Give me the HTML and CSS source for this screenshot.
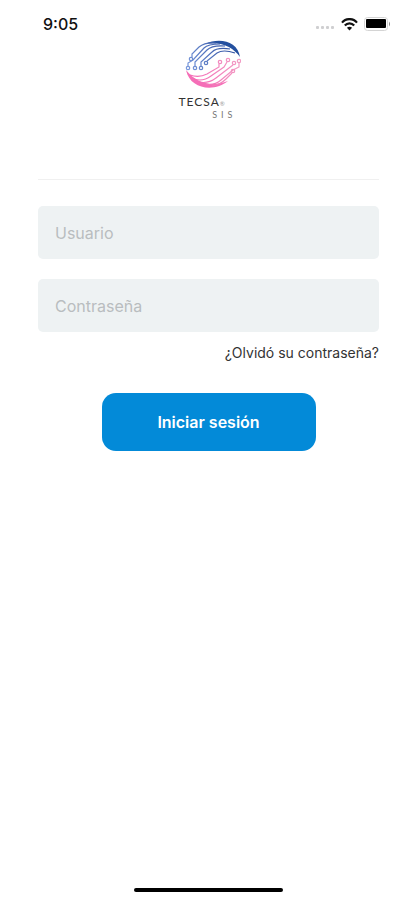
FILE: index.html
```html
<!DOCTYPE html>
<html lang="es">
<head>
<meta charset="utf-8">
<meta name="viewport" content="width=device-width, initial-scale=1">
<title>TECSA SIS</title>
<link rel="stylesheet" href="styles.css">
</head>
<body>
<header class="status">
  <span class="time">9:05</span>
  <div class="indicators">
    <svg class="signal" width="20" height="6" viewBox="0 0 20 6" fill="#cfcfd1" aria-hidden="true"><rect x="1" y="1" width="3" height="3" rx="1"/><rect x="6" y="1" width="3" height="3" rx="1"/><rect x="11" y="1" width="3" height="3" rx="1"/><rect x="16" y="1" width="3" height="3" rx="1"/></svg>
    <svg width="17" height="13" viewBox="0 0 17 13" fill="none" stroke="#111" stroke-width="2.2" aria-hidden="true"><path d="M1 4.6C5-.1 12-.1 16 4.6M3.8 7.6c2.6-2.9 6.8-2.9 9.4 0"/><path d="M8.5 12.5 5.9 9.8q2.6-2.2 5.2 0z" fill="#111" stroke="none"/></svg>
    <svg width="27" height="14" viewBox="0 0 27 14" aria-hidden="true"><rect x=".5" y=".5" width="23" height="13" rx="3" fill="#fff" stroke="#d4d4d4"/><rect x="2" y="2" width="20" height="9" rx="1" fill="#000"/><path d="M25 4.500q2 2.500 0 5z" fill="#888"/></svg>
  </div>
</header>
<main class="login">
  <div class="brand">
    <svg class="mark" width="56" height="50" viewBox="0 0 56 50" fill="none" aria-hidden="true">
      <defs>
        <linearGradient id="blue" gradientUnits="userSpaceOnUse" x1="2" y1="28" x2="50" y2="6"><stop stop-color="#7898dc"/><stop offset="1" stop-color="#294b9c"/></linearGradient>
        <linearGradient id="pink" gradientUnits="userSpaceOnUse" x1="4" y1="40" x2="54" y2="20"><stop stop-color="#f465b4"/><stop offset="1" stop-color="#f29cc4"/></linearGradient>
      </defs>
      <path d="M20 4C34-3 53 1 55 17 48 7 36 1 20 4z" fill="#24509f"/>
      <g stroke="url(#blue)" stroke-width="1.2">
        <path d="M7 17V14L14 7Q20 2 31 3"/><path d="M3 26V23L8 20 19 8Q23 4 35 4"/><path d="M10 26V22L22 10Q27 5 40 6"/><path d="M16 26V22L27 12Q32 7 45 9"/><path d="M22 21 32 13Q38 9 50 13"/>
        <circle cx="6" cy="19" r="1.700"/><circle cx="3" cy="28" r="1.700"/><circle cx="10" cy="28" r="1.700"/><circle cx="16" cy="28" r="1.700"/><circle cx="21" cy="23" r="1.700"/>
      </g>
      <path d="M1 30C5 50 30 52 43 41 27 47 12 44 1 30z" fill="#f56eb7"/>
      <g stroke="url(#pink)" stroke-width="1.2">
        <path d="M34 24V27L22 34Q14 38 5 35"/><path d="M42 22 39 27 26 36Q18 42 9 39"/><path d="M48 25 44 28 31 38Q23 44 14 42"/><path d="M54 23V27L48 30 36 40Q29 46 20 44"/><path d="M47 33 41 39Q35 45 27 46"/>
        <circle cx="35" cy="22" r="1.700"/><circle cx="43" cy="20" r="1.700"/><circle cx="49" cy="23" r="1.700"/><circle cx="54" cy="21" r="1.700"/><circle cx="48" cy="31" r="1.700"/>
      </g>
    </svg>
    <div class="wordmark"><span class="name">TECSA<span class="reg">®</span></span><span class="sub">SIS</span></div>
  </div>
  <form class="form">
    <input class="field" type="text" placeholder="Usuario" aria-label="Usuario">
    <input class="field" type="password" placeholder="Contraseña" aria-label="Contraseña">
    <a class="forgot" href="#">¿Olvidó su contraseña?</a>
    <button class="submit" type="submit">Iniciar sesión</button>
  </form>
</main>
<footer class="home"><div class="home-bar"></div></footer>
</body>
</html>
```
FILE: styles.css
```css
* { box-sizing: border-box; }
body {
  margin: 0;
  min-height: 100vh;
  display: flex;
  flex-direction: column;
  background: #fff;
  color: #222;
  font-family: Inter, "Liberation Sans", sans-serif;
}
.status {
  display: flex;
  align-items: center;
  justify-content: space-between;
  height: 40px;
  padding: 8px 26px 0 43px;
}
.time { font-size: 16px; font-weight: 500; color: #111; }
.indicators { display: flex; align-items: center; gap: 6px; }
.signal { align-self: flex-end; }
.login { flex: 1; padding: 0 38px; }
.brand {
  display: flex;
  flex-direction: column;
  align-items: center;
  height: 140px;
  padding-left: 8px;
  border-bottom: 1px solid #f0f0f0;
}
.mark { display: block; }
.wordmark {
  display: flex;
  flex-direction: column;
  width: 68px;
  margin-top: 6px;
  font-family: Lato, sans-serif;
  line-height: 11px;
}
.name { font-size: 12px; color: #333; letter-spacing: 1px; }
.reg { font-size: 6px; color: #999; }
.sub {
  align-self: flex-end;
  padding-right: 10px;
  font-size: 9px;
  letter-spacing: 4px;
  color: #777;
}
.form { display: flex; flex-direction: column; padding-top: 26px; }
.field {
  width: 100%;
  height: 53px;
  margin-bottom: 20px;
  padding: 0 17px;
  border: 0;
  border-radius: 5px;
  background: #eef2f3;
  color: #222;
  font: 16px Inter, sans-serif;
}
.field::placeholder { color: #b9bdbf; opacity: 1; }
.forgot {
  align-self: flex-end;
  margin-top: -8px;
  font-size: 14px;
  line-height: 18px;
  color: #333;
  text-decoration: none;
}
.submit {
  align-self: center;
  width: 214px;
  height: 58px;
  margin-top: 31px;
  border: 0;
  border-radius: 14px;
  background: #038ad8;
  color: #fff;
  font: 600 16px Inter, sans-serif;
}
.home { display: flex; justify-content: center; padding-bottom: 8px; }
.home-bar { width: 149px; height: 4px; border-radius: 2px; background: #000; }
```
